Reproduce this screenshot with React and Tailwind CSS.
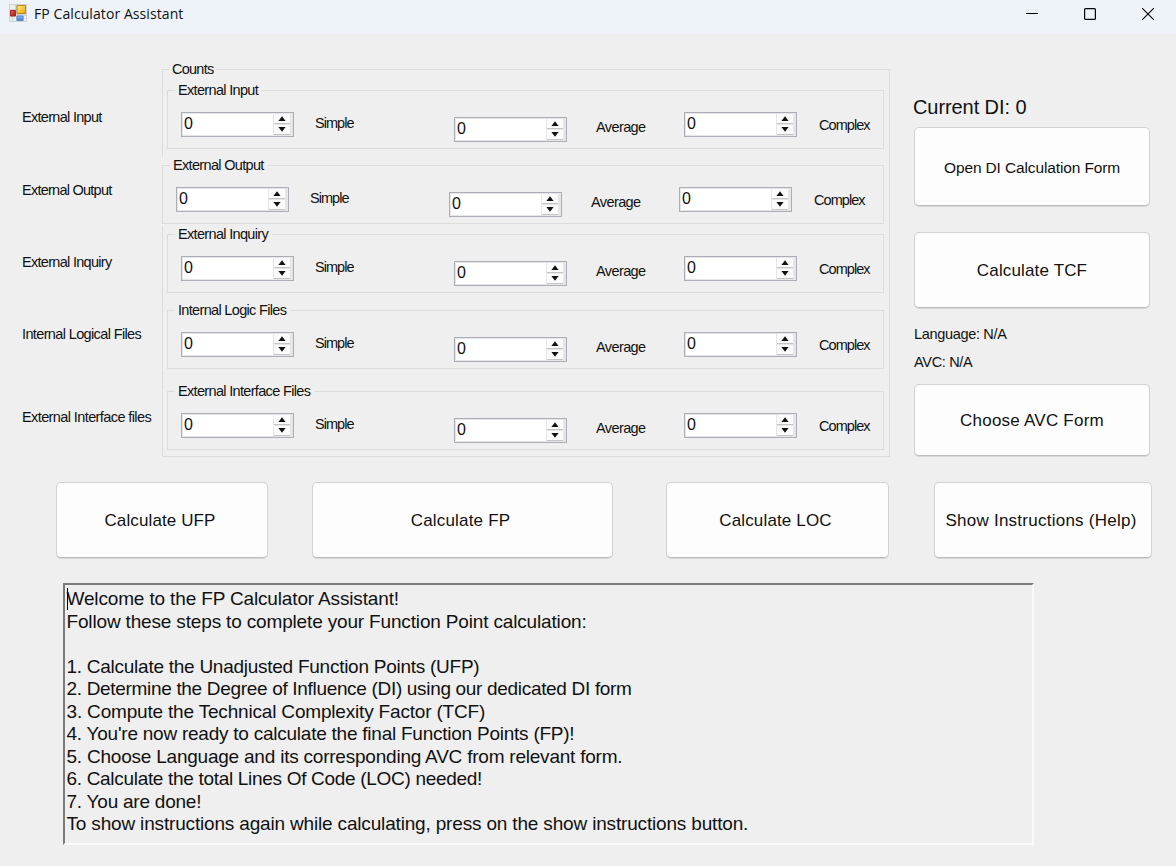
import React from "react";

const labelText = "text-[14.5px] leading-5 whitespace-nowrap";

function Spinner({ className = "" }) {
  return (
    <div className={`flex h-[25px] w-[113px] border border-[#adadb5] bg-white shadow-[inset_0_0_0_1px_#e6e6ea] ${className}`}>
      <span className="flex-1 pt-px pl-0.5 text-[16px] leading-[19px] tracking-[-0.5px]">0</span>
      <div className="flex w-5 flex-col gap-px bg-[#e6e6e9] pt-px pr-[3px] pl-px">
        <button className="flex h-2.5 items-center justify-center border-b border-[#c4c4c4] bg-[#fbfbfb]">
          <svg width="8" height="5" viewBox="0 0 8 5"><path d="M4 .3 7.600 5H.4z" fill="#111" /></svg>
        </button>
        <button className="flex h-2.5 items-center justify-center border-b border-[#c4c4c4] bg-[#fbfbfb]">
          <svg width="8" height="5" viewBox="0 0 8 5"><path d="M4 4.700.4 0h7.200z" fill="#111" /></svg>
        </button>
      </div>
    </div>
  );
}

function CountGroup({ title, className = "" }) {
  return (
    <div className={`bg-[#efefef] ${className}`}>
      <fieldset className="h-[67px] border border-[#dcdcdc]">
        <legend className="ml-[7px] h-[17px] pr-1 pl-[3px] text-[14.5px] leading-[17px] tracking-[-0.67px] whitespace-nowrap">{title}</legend>
        <div className="grid grid-cols-[134px_139px_142px_88px_135px_60px] items-start pl-[13px]">
          <Spinner className="mt-[13px]" />
          <span className={`mt-[14px] tracking-[-0.95px] ${labelText}`}>Simple</span>
          <Spinner className="mt-[18px]" />
          <span className={`mt-[18px] tracking-[-0.6px] ${labelText}`}>Average</span>
          <Spinner className="mt-[13px]" />
          <span className={`mt-4 tracking-[-0.95px] ${labelText}`}>Complex</span>
        </div>
      </fieldset>
    </div>
  );
}

function Button({ children, className = "" }) {
  return (
    <button className={`rounded-[5px] border border-[#d2d2d2] border-b-[#bcbcbc] bg-[#fdfdfd] pt-0.5 text-center whitespace-nowrap shadow-[0_1px_0_#d8d8d8] ${className}`}>
      {children}
    </button>
  );
}

function TitleBar() {
  return (
    <header className="flex h-[33px] justify-between bg-[#eef3fa]">
      <div className="flex pl-[9px]">
        <svg className="mt-1" width="18" height="18" viewBox="0 0 18 18">
          <defs>
            <linearGradient id="gold" x1="0" y1="0" x2="1" y2="1"><stop stopColor="#ffe98a" /><stop offset="1" stopColor="#e9a800" /></linearGradient>
            <linearGradient id="red" x1="0" y1="0" x2="1" y2="1"><stop stopColor="#e0685a" /><stop offset="1" stopColor="#a51212" /></linearGradient>
            <linearGradient id="blue" x1="0" y1="0" x2="0" y2="1"><stop stopColor="#8db8f5" /><stop offset="1" stopColor="#3d78dc" /></linearGradient>
          </defs>
          <path d="M0 0h18v18H0z" fill="#cfd2d6" />
          <path d="M1 1h5v4H1zM1 13h2v4H1zM4 13h3v4H4zM15 12h2v5h-2z" fill="#eceef0" />
          <path d="M8 1.500h8.500v8H8z" fill="url(#gold)" stroke="#b98a18" />
          <path d="M1.500 6.500h5v5.500h-5z" fill="url(#red)" stroke="#a32a22" />
          <path d="M8 12h6v4.500H8z" fill="url(#blue)" stroke="#5487d8" />
        </svg>
        <h1 className="ml-[7px] font-['Open_Sans',sans-serif] text-[14px] leading-[27px] tracking-[0.08px] whitespace-nowrap">FP Calculator Assistant</h1>
      </div>
      <div className="flex gap-[46px] pt-2 pr-[22px]">
        <svg width="12" height="12" viewBox="0 0 12 12"><path d="M0 5.500h12" stroke="#000" /></svg>
        <svg width="12" height="12" viewBox="0 0 12 12"><rect x=".6" y=".6" width="10.800" height="10.800" rx="1" fill="none" stroke="#000" strokeWidth="1.200" /></svg>
        <svg width="12" height="12" viewBox="0 0 12 12"><path d="m.3.3 11.400 11.400M11.700.3.3 11.700" stroke="#000" strokeWidth="1.100" /></svg>
      </div>
    </header>
  );
}

const steps = [
  ["Welcome to the FP Calculator Assistant!", "tracking-[-0.15px]"],
  ["Follow these steps to complete your Function Point calculation:", "tracking-[-0.16px]"],
  ["\u00a0", ""],
  ["1. Calculate the Unadjusted Function Points (UFP)", "tracking-[-0.26px]"],
  ["2. Determine the Degree of Influence (DI) using our dedicated DI form", "tracking-[-0.32px]"],
  ["3. Compute the Technical Complexity Factor (TCF)", "tracking-[-0.18px]"],
  ["4. You're now ready to calculate the final Function Points (FP)!", "tracking-[-0.24px]"],
  ["5. Choose Language and its corresponding AVC from relevant form.", "tracking-[-0.22px]"],
  ["6. Calculate the total Lines Of Code (LOC) needed!", "tracking-[-0.31px]"],
  ["7. You are done!", "tracking-[-0.23px]"],
  ["To show instructions again while calculating, press on the show instructions button.", "tracking-[-0.17px]"],
];

export default function App() {
  return (
    <div className="h-[866px] w-[1176px] overflow-hidden bg-[#efefef] font-['Liberation_Sans',Arial,sans-serif] text-[#111]">
      <TitleBar />
      <main>
        <section className="flex h-[424px] pt-7">
          <div className={`flex w-[162px] flex-col pt-[46px] pl-[22px] ${labelText}`}>
            <span className="tracking-[-0.7px]">External Input</span>
            <span className="mt-[53px] tracking-[-0.75px]">External Output</span>
            <span className="mt-[52px] tracking-[-0.7px]">External Inquiry</span>
            <span className="mt-[52px] tracking-[-0.63px]">Internal Logical Files</span>
            <span className="mt-[63px] tracking-[-0.6px]">External Interface files</span>
          </div>

          <fieldset className="h-[396px] w-[728px] border border-[#dcdcdc] pr-[5px]">
            <legend className="ml-1.5 h-[17px] px-[3px] text-[14.5px] leading-[17px] tracking-[-0.75px]">Counts</legend>
            <CountGroup title="External Input" className="mt-1 ml-1" />
            <CountGroup title="External Output" className="mt-2 -ml-px pb-0.5" />
            <CountGroup title="External Inquiry" className="ml-1" />
            <CountGroup title="Internal Logic Files" className="mt-[9px] ml-1" />
            <CountGroup title="External Interface Files" className="mt-[14px] ml-1" />
          </fieldset>

          <aside className="ml-6 flex w-[236px] flex-col pt-[34px]">
            <span className="-ml-px text-[20px] leading-6 tracking-[-0.08px] whitespace-nowrap">Current DI: 0</span>
            <Button className="mt-2 h-[79px] text-[15.5px] tracking-[-0.13px]">Open DI Calculation Form</Button>
            <Button className="mt-[26px] h-[76px] text-[17px] tracking-[0.15px]">Calculate TCF</Button>
            <span className={`mt-4 tracking-[-0.32px] ${labelText}`}>Language: N/A</span>
            <span className={`mt-2 tracking-[-0.32px] ${labelText}`}>AVC: N/A</span>
            <Button className="mt-3 h-[72px] text-[17px] tracking-[0.23px]">Choose AVC Form</Button>
          </aside>
        </section>

        <section className="mt-[25px] flex h-[76px] pl-14 text-[17px]">
          <Button className="w-[212px] pr-1 tracking-[0.12px]">Calculate UFP</Button>
          <Button className="ml-11 w-[301px] pr-1 tracking-[0.18px]">Calculate FP</Button>
          <Button className="ml-[53px] w-[223px] pr-1 tracking-[0.15px]">Calculate LOC</Button>
          <Button className="ml-[45px] w-[218px] pr-1 tracking-[0.25px]">Show Instructions (Help)</Button>
        </section>

        <section className="mt-[25px] ml-[63px] h-[262px] w-[971px] border-2 border-t-[#7b7b7b] border-r-[#fafafa] border-b-[#fafafa] border-l-[#7b7b7b] pt-[3px] pl-[1.5px] text-[19px] leading-[22.5px]">
          {steps.map(([line, tracking], i) => (
            <p key={i} className="flex whitespace-nowrap">
              {i === 0 && <i className="-mr-px h-[22px] w-px bg-black" />}
              <span className={tracking}>{line}</span>
            </p>
          ))}
        </section>
      </main>
    </div>
  );
}
